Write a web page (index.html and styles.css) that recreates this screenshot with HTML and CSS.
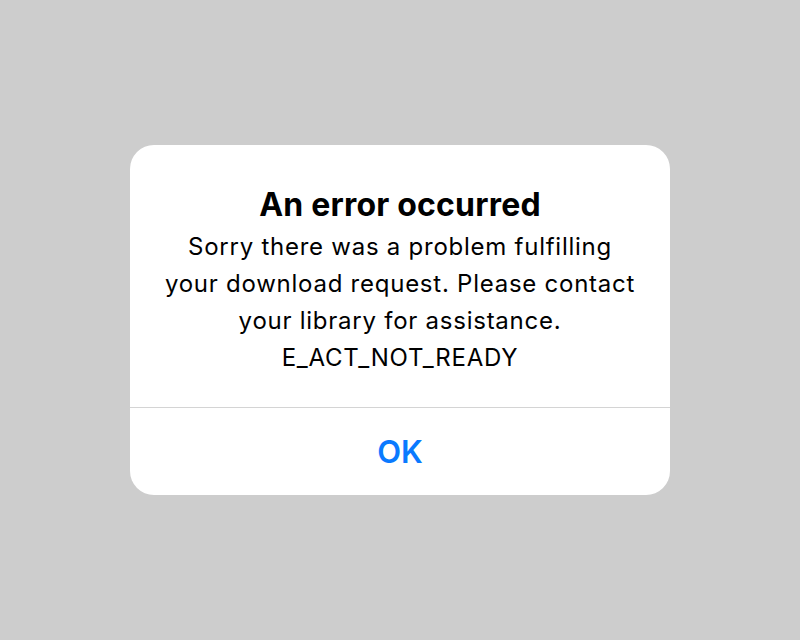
FILE: index.html
```html
<!DOCTYPE html>
<html lang="en">
<head>
  <meta charset="UTF-8" />
  <meta name="viewport" content="width=device-width, initial-scale=1.0"/>
  <title>Error</title>
  <link rel="stylesheet" href="styles.css">
</head>
<body>
  <div class="overlay">
    <div class="alert" role="alertdialog">
      <div class="alert-body">
        <h1 class="alert-title">An error occurred</h1>
        <p class="alert-message">Sorry there was a problem fulfilling your download request. Please contact your library for assistance.<br>E_ACT_NOT_READY</p>
      </div>
      <button class="alert-button" type="button">OK</button>
    </div>
  </div>
</body>
</html>
```

FILE: styles.css
```css
body {
  margin: 0;
  font-family: 'Inter', 'Noto Sans', sans-serif;
  background-color: #cdcdcd;
  color: #000;
}
.overlay {
  height: 640px;
  display: flex;
  align-items: center;
  justify-content: center;
}
.alert {
  width: 540px;
  background: #fff;
  border-radius: 24px;
  overflow: hidden;
}
.alert-body {
  padding: 42px 32px 31px;
  text-align: center;
  border-bottom: 1px solid #d4d4d4;
}
.alert-title {
  margin: 0 0 5px;
  font-size: 32px;
  font-weight: 700;
  line-height: 36px;
  letter-spacing: 0.2px;
}
.alert-message {
  margin: 0;
  font-size: 24px;
  line-height: 37px;
  letter-spacing: 0.75px;
}
.alert-button {
  display: block;
  width: 100%;
  height: 87px;
  border: none;
  background: none;
  color: #0a7aff;
  font-family: inherit;
  font-size: 31px;
  font-weight: 600;
  cursor: pointer;
}
```
